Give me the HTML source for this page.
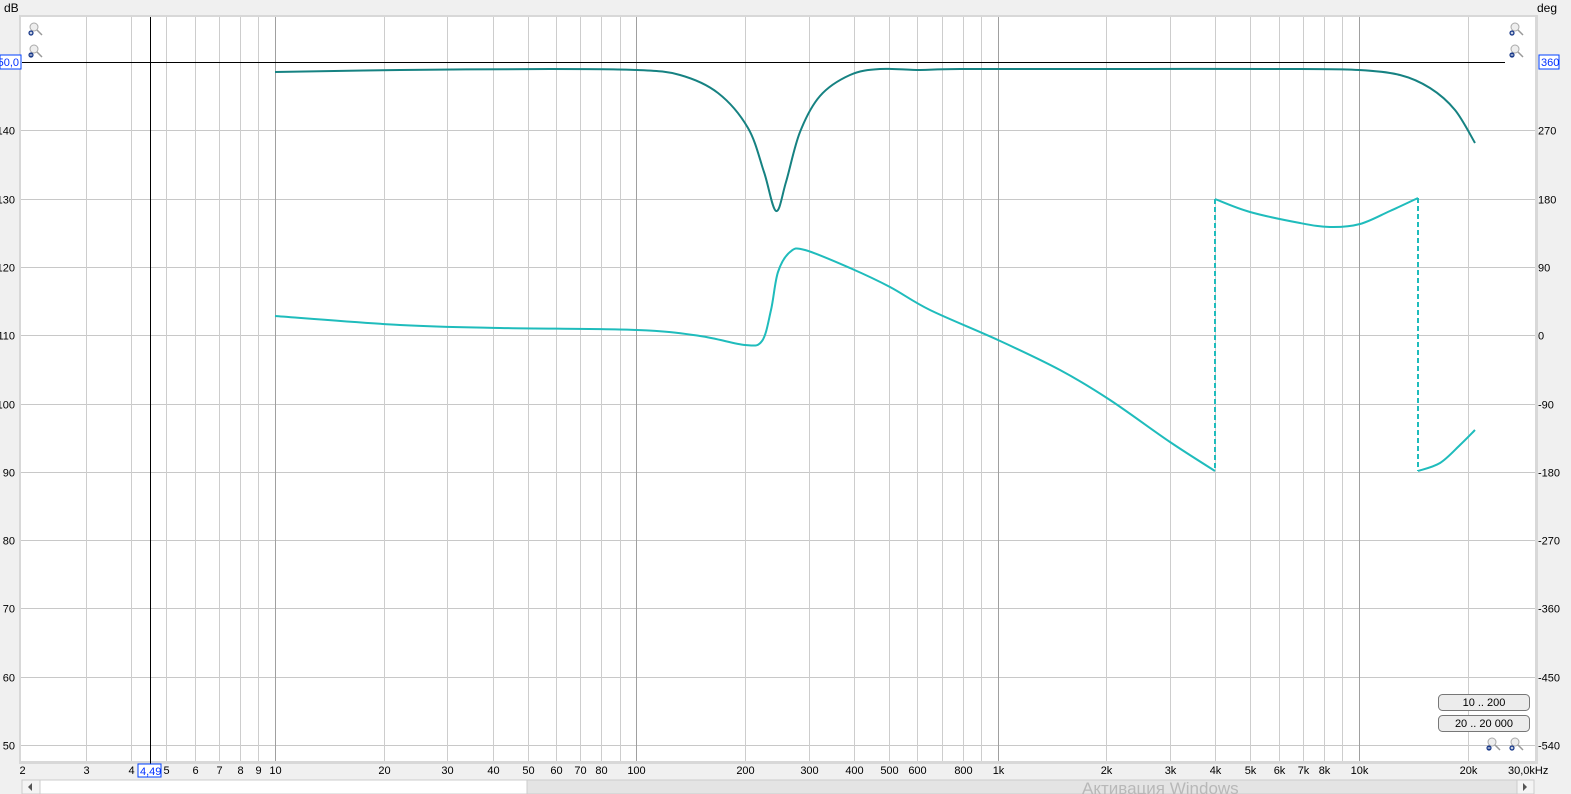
<!DOCTYPE html>
<html><head><meta charset="utf-8"><style>
html,body{margin:0;padding:0;background:#f0f0f0;width:1571px;height:794px;overflow:hidden;font-family:"Liberation Sans",sans-serif;}
svg{position:absolute;left:0;top:0}
</style></head><body>
<svg id="s" width="1571" height="794" xmlns="http://www.w3.org/2000/svg" font-family="Liberation Sans, sans-serif" font-size="11">
<rect x="0" y="0" width="1571" height="794" fill="#f0f0f0"/>
<rect x="19" y="15" width="1519" height="749" fill="#d8d8d8"/>
<rect x="21" y="17" width="1514" height="744" fill="#ffffff"/>
<g id="grid"></g>
<g id="curves" fill="none"></g>
<g id="labels" fill="#000"></g>
<text x="4" y="12" font-size="12">dB</text>
<text x="1537" y="12" font-size="12">deg</text>
<rect x="0" y="55" width="21" height="14" fill="#fff" stroke="#0040ff"/>
<text x="19" y="66" text-anchor="end" fill="#0030ff" font-size="11">150,0</text>
<rect x="1539" y="55" width="20" height="14" fill="#fff" stroke="#0040ff"/>
<text x="1541" y="66" fill="#0030ff" font-size="11">360</text>
<rect x="138" y="764" width="23" height="13" fill="#fff" stroke="#0040ff"/>
<text x="140" y="775" fill="#0030ff" font-size="11">4,49</text>
<!-- buttons -->
<rect x="1438.5" y="694.5" width="91" height="16" rx="4" fill="#ececec" stroke="#777"/>
<text x="1484" y="706" text-anchor="middle" font-size="11">10 .. 200</text>
<rect x="1438.5" y="715.5" width="91" height="16" rx="4" fill="#ececec" stroke="#777"/>
<text x="1484" y="727" text-anchor="middle" font-size="11">20 .. 20 000</text>
<!-- scrollbar -->
<rect x="22" y="780" width="1512" height="14" fill="#f0f0f0"/>
<rect x="40" y="780" width="487" height="14" fill="#fff" stroke="#ccc"/>
<rect x="527" y="780" width="990" height="14" fill="#e4e4e4" stroke="#ccc"/>
<rect x="22" y="780" width="18" height="14" fill="#f4f4f4" stroke="#ccc"/>
<path d="M32 783 L28 787 L32 791Z" fill="#555"/>
<rect x="1517" y="780" width="17" height="14" fill="#f4f4f4" stroke="#ccc"/>
<path d="M1523 783 L1527 787 L1523 791Z" fill="#555"/>
<text x="1082" y="794" font-size="17" fill="#b8b8b8">Активация Windows</text>
<g id="zoom"></g>
</svg>
<script>
const NS="http://www.w3.org/2000/svg";
function el(p,t,a,txt){const e=document.createElementNS(NS,t);for(const k in a)e.setAttribute(k,a[k]);if(txt!==undefined)e.textContent=txt;p.appendChild(e);return e;}
const X=f=>275+361.3*Math.log10(f/10);
const Y=db=>62+(150-db)*6.83;
const g=document.getElementById('grid'),L=document.getElementById('labels');
// horizontal
for(let db=50;db<=140;db+=10){const y=Math.round(Y(db))+0.5;el(g,'line',{x1:21,x2:1535,y1:y,y2:y,stroke:'#c8c8c8'});
 el(L,'text',{x:15,y:y+4,'text-anchor':'end'},db);
 el(L,'text',{x:1538,y:y+4},360-(150-db)*9);}
// vertical
const freqs=[];
for(let d of [1,10,100,1000,10000])for(let m=1;m<10;m++){const f=d*m;if(f>=2&&f<=30000)freqs.push(f);}
freqs.push(20000,30000);
const lab={2:'2',3:'3',4:'4',5:'5',6:'6',7:'7',8:'8',9:'9',10:'10',20:'20',30:'30',40:'40',50:'50',60:'60',70:'70',80:'80',100:'100',200:'200',300:'300',400:'400',500:'500',600:'600',800:'800',1000:'1k',2000:'2k',3000:'3k',4000:'4k',5000:'5k',6000:'6k',7000:'7k',8000:'8k',10000:'10k',20000:'20k'};
const seen={};
for(const f of freqs){if(seen[f])continue;seen[f]=1;const x=Math.round(X(f))+0.5;
 const dec=[10,100,1000,10000].includes(f);
 if(f>2&&f<30000)el(g,'line',{x1:x,x2:x,y1:17,y2:761,stroke:dec?'#a0a0a0':'#cdcdcd'});
 if(lab[f])el(L,'text',{x:x,y:774,'text-anchor':'middle'},lab[f]);}
el(L,'text',{x:1508,y:774},'30,0kHz');
el(g,'line',{x1:22,x2:1505,y1:62.5,y2:62.5,stroke:'#000'});
el(g,'line',{x1:150.5,x2:150.5,y1:17,y2:764,stroke:'#000'});
function path(pts){let d='M'+pts[0][0]+' '+pts[0][1];
 for(let i=0;i<pts.length-1;i++){const p0=pts[i-1]||pts[i],p1=pts[i],p2=pts[i+1],p3=pts[i+2]||p2;
 const c1=[p1[0]+(p2[0]-p0[0])/6,p1[1]+(p2[1]-p0[1])/6],c2=[p2[0]-(p3[0]-p1[0])/6,p2[1]-(p3[1]-p1[1])/6];
 d+=` C${c1[0].toFixed(1)} ${c1[1].toFixed(1)} ${c2[0].toFixed(1)} ${c2[1].toFixed(1)} ${p2[0]} ${p2[1]}`;}return d;}
const C=document.getElementById('curves');
const mag=[[275,72],[400,70],[550,69],[637,70],[680,75],[718,93],[748,128],[764,172],[776,211],[786,182],[800,132],[820,96],[850,75],[880,69],[920,70],[960,69],[1100,69],[1300,69],[1359,70],[1400,75],[1430,88],[1455,110],[1475,143]];
el(C,'path',{d:path(mag),stroke:'#168282','stroke-width':2});
const ph1=[[275,316],[400,325],[500,328],[637,330],[700,336],[745,345],[762,341],[771,310],[778,272],[790,252],[805,250],[850,268],[890,287],[930,310],[998,340],[1060,370],[1110,400],[1170,442],[1215,471]];
const ph2=[[1215,199],[1250,212],[1300,223],[1330,227],[1360,224],[1390,211],[1418,198]];
const ph3=[[1418,471],[1440,463],[1460,445],[1475,430]];
for(const p of [ph1,ph2,ph3])el(C,'path',{d:path(p),stroke:'#1fbcbc','stroke-width':2});
el(C,'line',{x1:1215,x2:1215,y1:199,y2:471,stroke:'#1fbcbc','stroke-width':2,'stroke-dasharray':'5,3'});
el(C,'line',{x1:1418,x2:1418,y1:198,y2:471,stroke:'#1fbcbc','stroke-width':2,'stroke-dasharray':'5,3'});
// zoom icons
const Z=document.getElementById('zoom');
function zi(x,y,plus){el(Z,'circle',{cx:x+5,cy:y+4,r:4,fill:'#eee',stroke:'#aaa'});
 el(Z,'line',{x1:x+8,y1:y+7,x2:x+13,y2:y+12,stroke:'#999','stroke-width':1.5});
 el(Z,'circle',{cx:x+2,cy:y+10,r:2.6,fill:'#1a3a8a'});
 el(Z,'line',{x1:x+0.7,x2:x+3.3,y1:y+10,y2:y+10,stroke:'#fff'});
 if(plus)el(Z,'line',{x1:x+2,x2:x+2,y1:y+8.7,y2:y+11.3,stroke:'#fff'});}
zi(29,23,true);zi(29,45,false);zi(1510,23,true);zi(1510,45,false);zi(1487,738,false);zi(1510,738,true);
</script>
</body></html>
